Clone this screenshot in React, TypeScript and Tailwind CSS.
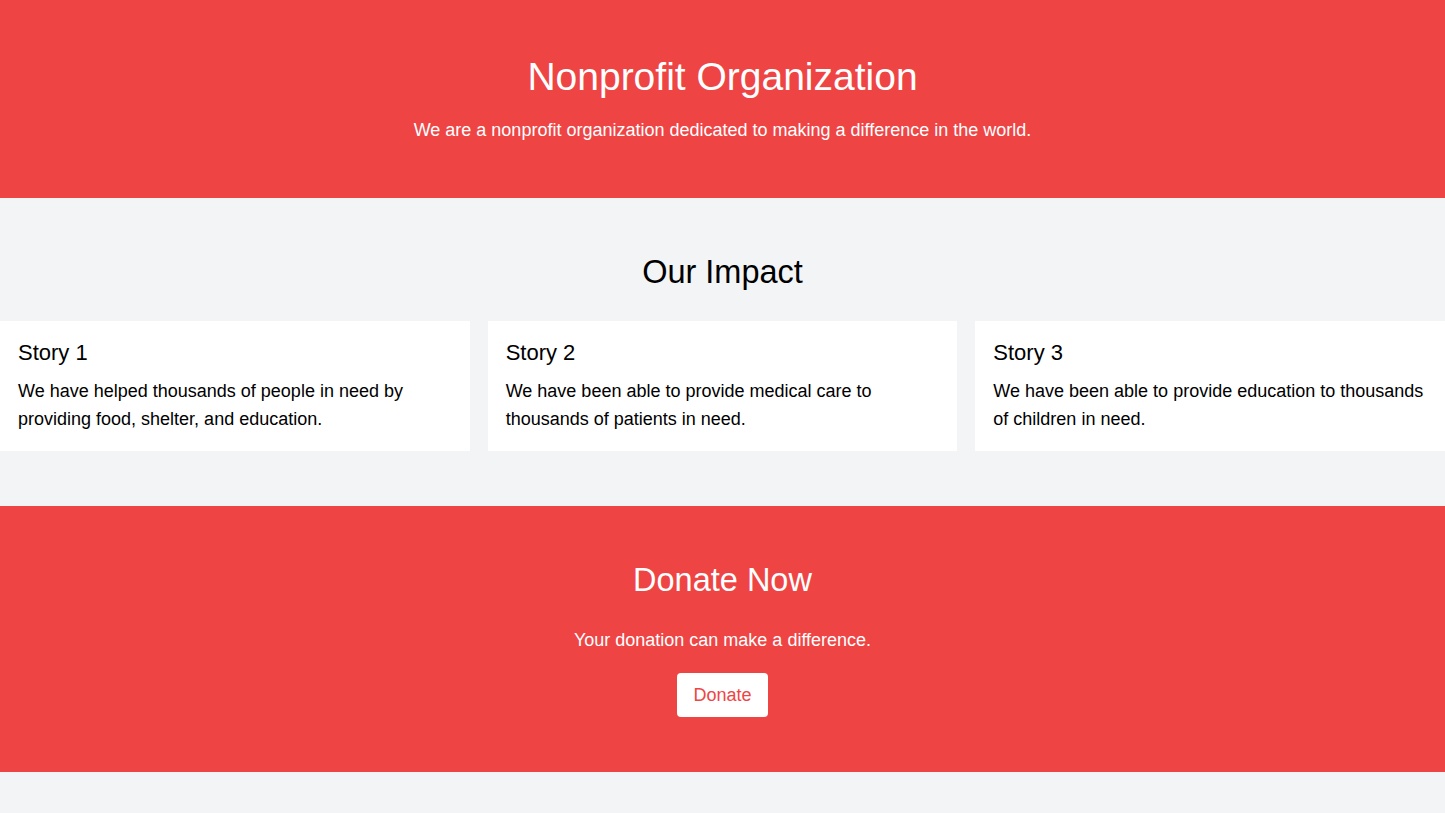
export default function App() {
  return (
    <div className="min-h-screen bg-[#f3f4f6] font-['Liberation_Sans',Arial,sans-serif] text-black">
      <header className="bg-[#ef4444] pt-[57px] pb-[54px] text-center text-white">
        <h1 className="text-[39px] leading-[40px]">Nonprofit Organization</h1>
        <p className="mt-[19px] text-lg">We are a nonprofit organization dedicated to making a difference in the world.</p>
      </header>
      <section className="pt-14 pb-[55px]">
        <h2 className="mb-[31px] text-center text-[32.5px] leading-[36px]">Our Impact</h2>
        <div className="grid grid-cols-3 gap-[18px]">
          <div className="bg-white p-[18px]">
            <h3 className="mb-[10px] text-[22px] leading-[28px]">Story 1</h3>
            <p className="text-lg">We have helped thousands of people in need by providing food, shelter, and education.</p>
          </div>
          <div className="bg-white p-[18px]">
            <h3 className="mb-[10px] text-[22px] leading-[28px]">Story 2</h3>
            <p className="text-lg">We have been able to provide medical care to thousands of patients in need.</p>
          </div>
          <div className="bg-white p-[18px]">
            <h3 className="mb-[10px] text-[22px] leading-[28px]">Story 3</h3>
            <p className="text-lg">We have been able to provide education to thousands of children in need.</p>
          </div>
        </div>
      </section>
      <section className="bg-[#ef4444] pt-14 pb-[55px] text-center text-white">
        <h2 className="mb-7 text-[32.5px] leading-[36px]">Donate Now</h2>
        <p className="mb-[19px] text-lg">Your donation can make a difference.</p>
        <button className="rounded bg-white px-4 py-2 text-lg text-[#ef4444]">Donate</button>
      </section>
    </div>
  );
}
